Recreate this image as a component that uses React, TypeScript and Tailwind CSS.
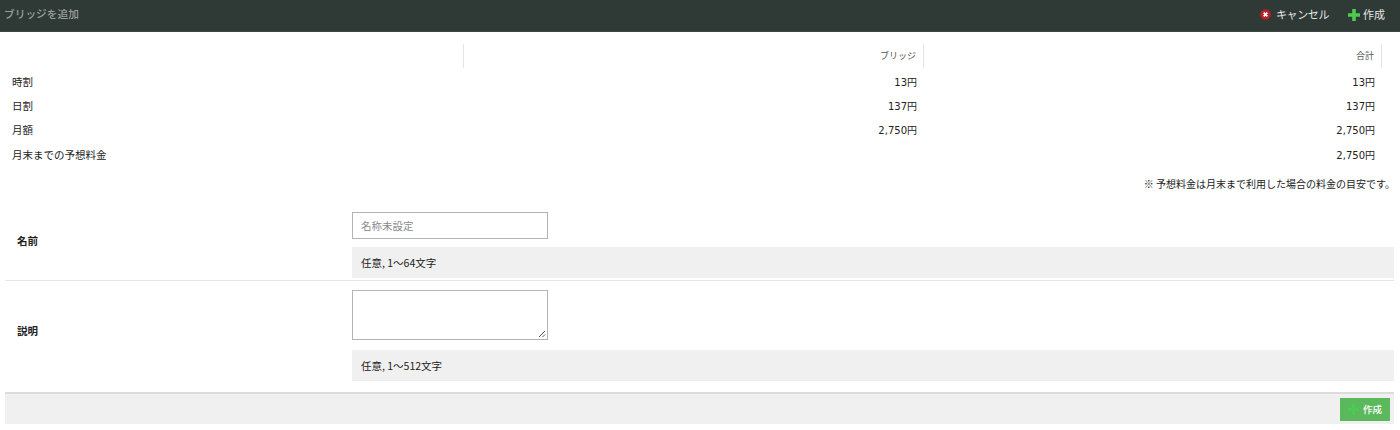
import React from "react";

const rows = [
  ["時割", "13円", "13円"],
  ["日割", "137円", "137円"],
  ["月額", "2,750円", "2,750円"],
  ["月末までの予想料金", "", "2,750円"],
];

function PlusIcon({ className }: { className?: string }) {
  return (
    <svg viewBox="0 0 12 12" className={className} fill="currentColor">
      <path d="M4.2 0h3.6v4.2H12v3.6H7.8V12H4.2V7.8H0V4.2h4.2z" />
    </svg>
  );
}

function HeadCell({ children }: { children?: React.ReactNode }) {
  return (
    <div className="h-[24px] flex items-center justify-end pr-[7px] border-r border-[#e4e4e4] text-[9px] text-[#555]">
      {children}
    </div>
  );
}

export default function App() {
  return (
    <div className="w-[1400px] h-[430px] bg-white overflow-hidden text-[10.5px] text-[#222] font-['Noto_Sans_CJK_JP','Open_Sans',sans-serif]">
      <header className="h-[32px] bg-[#2f3a37] flex items-center justify-between pl-[4px] pr-[15px] pb-[2px] border-b border-[#3a4643]">
        <span className="text-[#9a9f9d] text-[10.7px] font-medium">ブリッジを追加</span>
        <div className="flex items-center gap-[19px] text-[#e6e6e6] text-[11px]">
          <span className="flex items-center gap-[5px]">
            <svg viewBox="0 0 12 12" className="w-[11px] h-[11px]">
              <circle cx="6" cy="6" r="5.8" fill="#b5202a" />
              <path d="M4 4l4 4M8 4l-4 4" stroke="#fff" strokeWidth="2" />
            </svg>
            <span className="tracking-[-0.4px]">キャンセル</span>
          </span>
          <span className="flex items-center gap-[3px]">
            <PlusIcon className="w-[12px] h-[12px] text-[#4fc94f]" />
            作成
          </span>
        </div>
      </header>

      <div className="pt-[12px] pl-[5px] pr-[18px]">
        <div className="grid grid-cols-[459px_460px_458px]">
          <HeadCell />
          <HeadCell>ブリッジ</HeadCell>
          <HeadCell>合計</HeadCell>
        </div>
        <div className="pt-[2px]">
          {rows.map((r, i) => (
            <div key={r[0]} className={`grid grid-cols-[459px_460px_458px] ${i === 3 ? "mt-[1px]" : ""}`}>
              <div className="h-[24px] flex items-center pl-[7px]">{r[0]}</div>
              <div className="h-[24px] flex items-center justify-end pr-[7px] font-['DejaVu_Sans','Noto_Sans_CJK_JP',sans-serif] text-[10px]">{r[1]}</div>
              <div className="h-[24px] flex items-center justify-end pr-[7px] font-['DejaVu_Sans','Noto_Sans_CJK_JP',sans-serif] text-[10px]">{r[2]}</div>
            </div>
          ))}
        </div>
      </div>

      <p className="pt-[9px] pr-[5px] text-right h-[30px] text-[10px]">※ 予想料金は月末まで利用した場合の料金の目安です。</p>

      <div className="mx-[5px] w-[1389px]">
        <div className="flex h-[84px] border-b border-[#e6e6e6]">
          <div className="w-[347px] flex items-center pl-[12px] pt-[5px] font-bold">名前</div>
          <div className="flex-1 pt-[15px]">
            <div className="h-[27px] w-[196px] border border-[#b4b4b4] flex items-center pl-[8px] text-[#8a8a8a]">名称未設定</div>
            <div className="mt-[8px] h-[31px] bg-[#f0f0f0] flex items-center pl-[9px]">任意, 1〜64文字</div>
          </div>
        </div>
        <div className="flex h-[111px] pt-[9px]">
          <div className="w-[347px] flex items-center pl-[12px] font-bold pb-[20px]">説明</div>
          <div className="flex-1">
            <div className="relative h-[50px] w-[196px] border border-[#b4b4b4]">
              <svg viewBox="0 0 8 8" className="absolute right-[1px] bottom-[1px] w-[8px] h-[8px]" stroke="#555" strokeWidth="1">
                <path d="M1 7l6-6M4.5 7L7 4.5" />
              </svg>
            </div>
            <div className="mt-[10px] h-[31px] bg-[#f0f0f0] flex items-center pl-[9px]">任意, 1〜512文字</div>
          </div>
        </div>
        <div className="h-[32px] bg-[#f0f0f0] border-t-2 border-[#dcdcdc] flex items-center justify-end pr-[4px]">
          <div className="w-[50px] h-[23px] bg-[#5cb85c] text-white flex items-center justify-center gap-[4px] text-[9.5px] font-medium">
            <PlusIcon className="w-[11px] h-[11px] shrink-0 text-[#4ccb52]" />
            作成
          </div>
        </div>
      </div>
    </div>
  );
}
